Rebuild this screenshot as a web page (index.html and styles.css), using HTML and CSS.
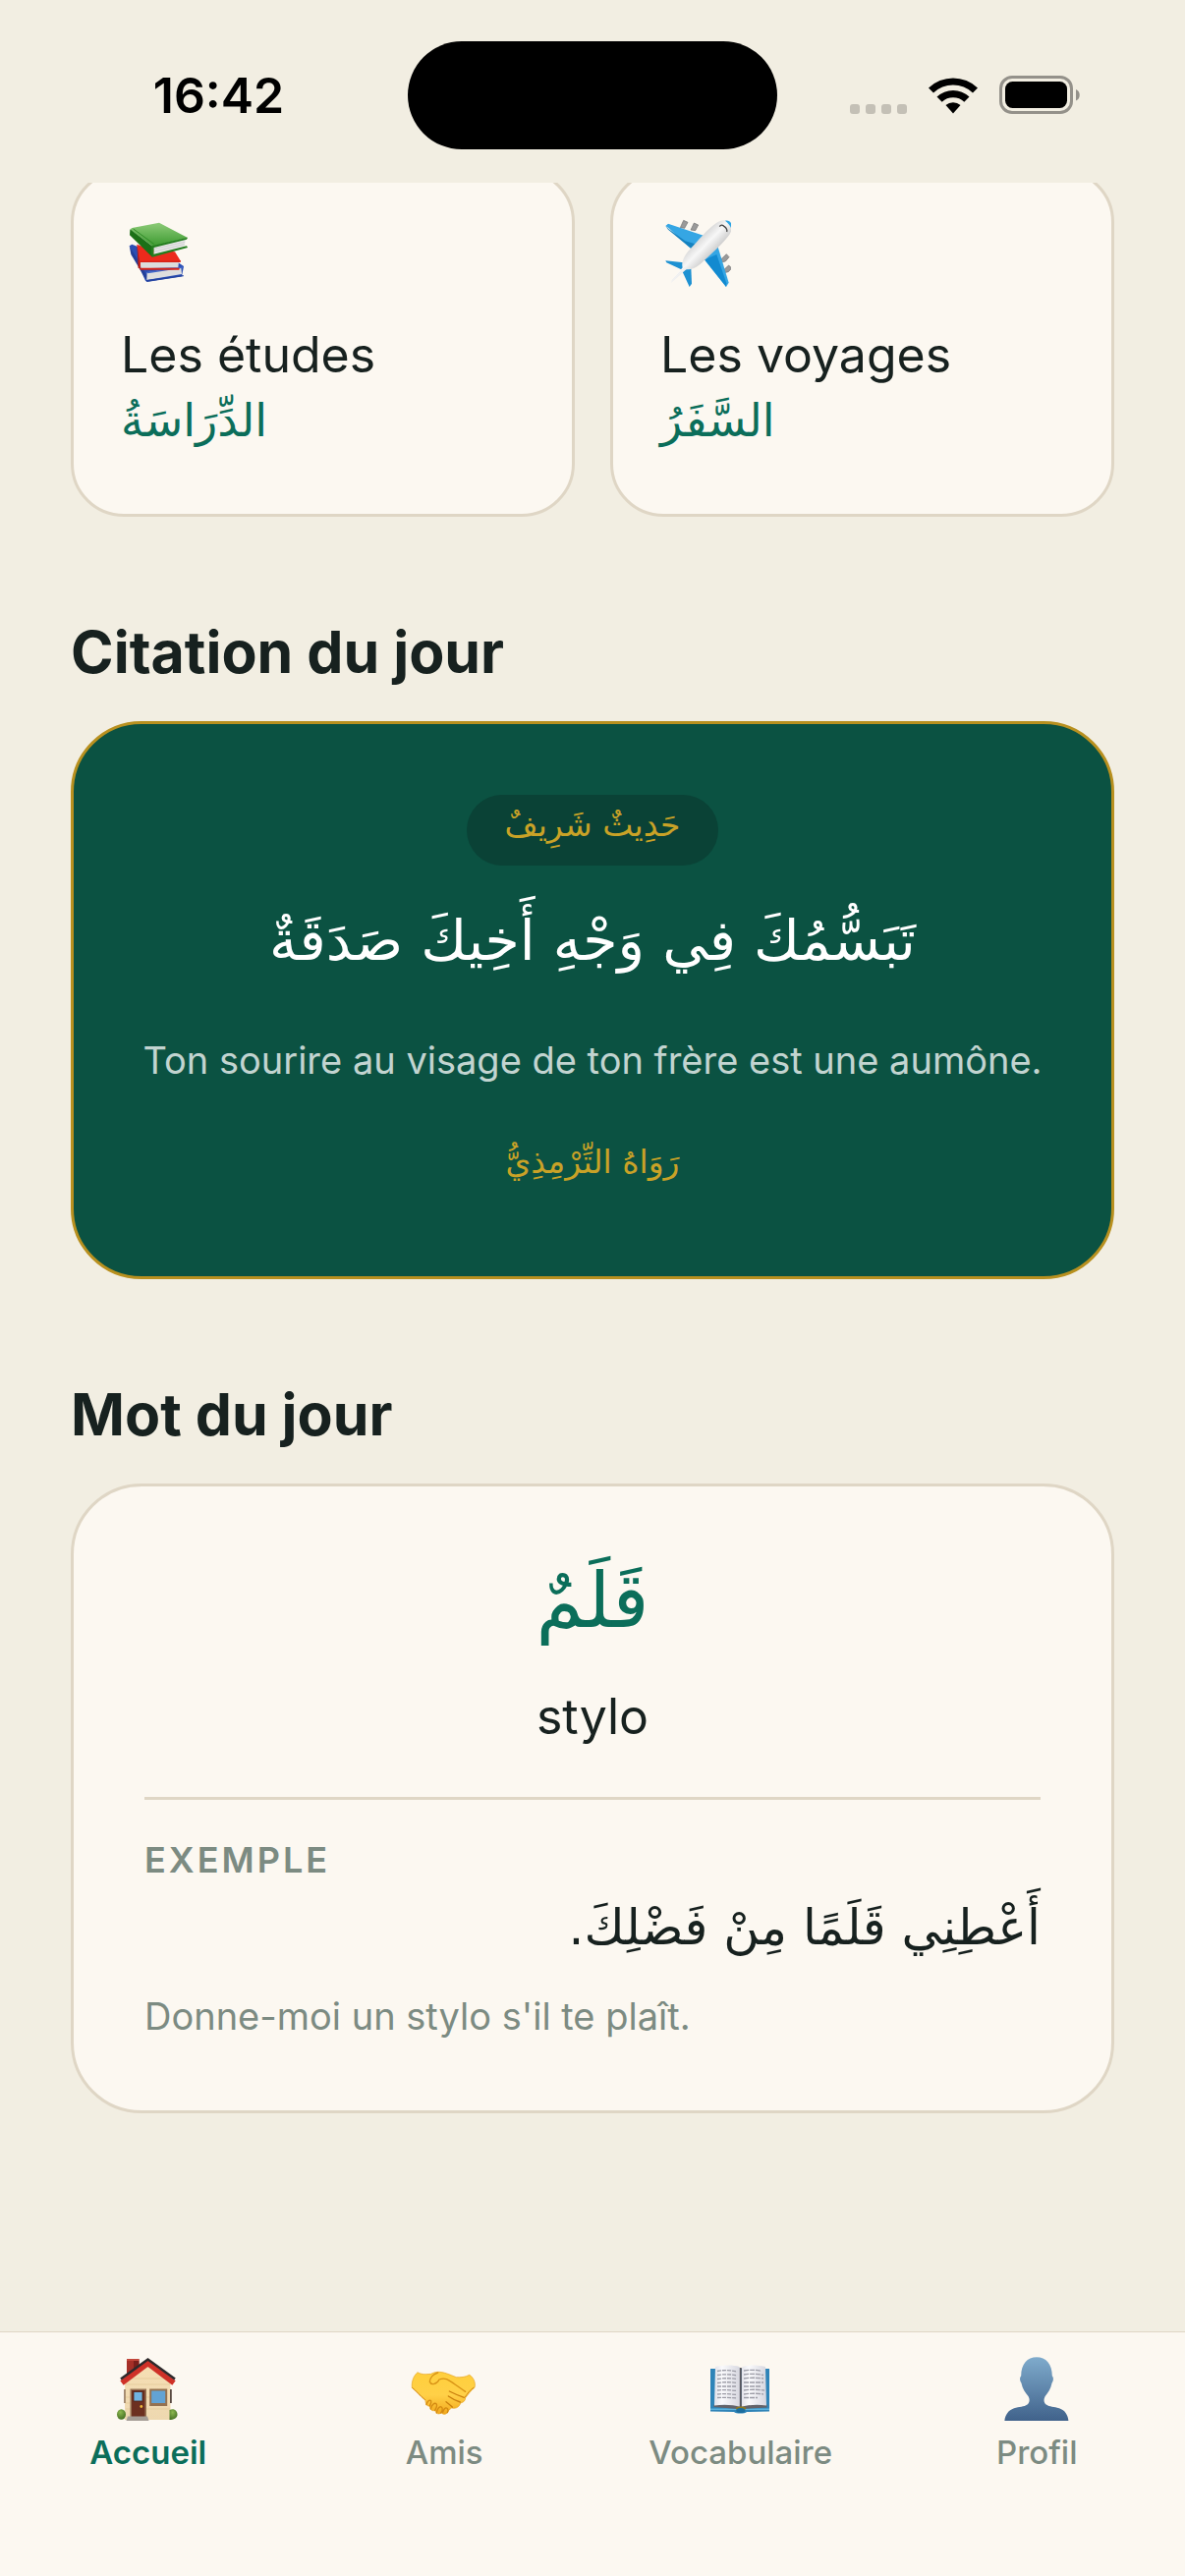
FILE: index.html
```
<!DOCTYPE html>
<html lang="fr">
<head>
    <meta charset="UTF-8">
    <meta name="viewport" content="width=device-width, initial-scale=1.0">
    <title>Accueil</title>
    <link rel="stylesheet" href="styles.css">
</head>
<body>
    <header class="status-bar">
        <div class="status-time">16:42</div>
        <div class="island"></div>
        <div class="status-icons">
            <svg class="signal" viewBox="0 0 58 38" aria-hidden="true">
                <g fill="#c4c0b6">
                    <rect x="0" y="28" width="10" height="10" rx="3"/>
                    <rect x="16" y="28" width="10" height="10" rx="3"/>
                    <rect x="32" y="28" width="10" height="10" rx="3"/>
                    <rect x="48" y="28" width="10" height="10" rx="3"/>
                </g>
            </svg>
            <svg class="wifi" viewBox="0 0 52 38" aria-hidden="true">
                <path d="M1 11.500a36 36 0 0 1 50 0l-5 5a29 29 0 0 0-40 0z"/>
                <path d="M9.500 20.500a24 24 0 0 1 33 0l-5.200 5.200a16.500 16.500 0 0 0-22.600 0z"/>
                <path d="M18.500 29a11.500 11.500 0 0 1 15 0L26 37.500z"/>
            </svg>
            <svg class="battery" viewBox="0 0 83 40" aria-hidden="true">
                <rect x="1.500" y="1.500" width="72" height="36" rx="11.500" fill="none" stroke="#94918a" stroke-width="3"/>
                <rect x="6" y="6" width="63" height="27" rx="7.500"/>
                <path d="M78 14c5 2 5 9.500 0 11.500z" fill="#94918a"/>
            </svg>
        </div>
    </header>

    <main class="scroll">
        <div class="content">
            <!-- Thèmes -->
            <div class="themes">
                <a class="card theme" href="#etudes">
                    <svg class="icon" viewBox="39 36 216 216" aria-hidden="true">
                        <defs>
                            <linearGradient id="green" x1="0" y1="0" x2="0" y2="1">
                                <stop offset="0" stop-color="#8dcb78"/>
                                <stop offset="1" stop-color="#3c9a30"/>
                            </linearGradient>
                        </defs>
                        <path d="M65 118l8-5 140 55 18 12-6 31-107 16-4-3z" fill="#2c4fb4"/>
                        <path d="M65 118l5 26 48 80 1-13-27-48z" fill="#243f98"/>
                        <path d="M119 199l104-15 2 20-107 18z" fill="#dedede"/>
                        <path d="M119 197l110-16v4l-108 17z" fill="#4065c8"/>
                        <path d="M118 222l112-15v4l-112 17z" fill="#2443a0"/>
                        <path d="M88 113l40 15 76 8 18 29-126 4z" fill="#ec2a1c"/>
                        <path d="M88 113l8 55 2 22-6-6z" fill="#b5180f"/>
                        <path d="M98 167l118-2-2 19-114 3z" fill="#dcdcdc"/>
                        <path d="M94 164l128-1-1 5H99v17h115l4 1-1 5H98z" fill="#d62318"/>
                        <path d="M156 47l87 46-106 26-68-50c0-5 4-7 8-7z" fill="url(#green)"/>
                        <path d="M67 67l69 52-1 33-69-67z" fill="#1b7017"/>
                        <path d="M139 119l98-22-4 23-94 26z" fill="#e6e6e6"/>
                        <path d="M141 127l93-21M141 135l92-22" stroke="#c6c6c6" stroke-width="2"/>
                        <path d="M134 118l109-26-3 6-100 25-1 20 101-25 3 5-108 29c-4-10-5-22-1-34z" fill="#247d1f"/>
                        <path d="M77 66l63 46" stroke="#2f8a28" stroke-width="3"/>
                    </svg>
                    <span class="theme-title">Les études</span>
                    <span class="theme-arabic" lang="ar" dir="rtl">الدِّرَاسَةُ</span>
                </a>
                <a class="card theme" href="#voyages">
                    <svg class="icon" viewBox="36 36 216 216" aria-hidden="true">
                        <defs>
                            <linearGradient id="fuselage" x1="0" y1="0" x2="1" y2="1">
                                <stop offset="0.250" stop-color="#b5b5b5"/>
                                <stop offset="0.480" stop-color="#f7f7f7"/>
                                <stop offset="0.600" stop-color="#d0d0d0"/>
                                <stop offset="0.750" stop-color="#777"/>
                            </linearGradient>
                        </defs>
                        <g fill="#9a9a9a" stroke="#6f6f6f" stroke-width="2">
                            <path d="M107 40l13 6-10 18-13-2z"/>
                            <path d="M139 48l13 6-9 17-14-2z"/>
                            <path d="M222 158l16-15 8 9-11 13-13 3z"/>
                            <path d="M231 190l14-13 9 9-10 11-13 3z"/>
                        </g>
                        <path d="M52 57l8-7 119 40-39 45-78-71z" fill="#35a6e4"/>
                        <path d="M52 57l10 10 50 36 28 8 10 24-12-2-78-65z" fill="#1582c0"/>
                        <path d="M211 118l34 112-8 13-66-83z" fill="#35a6e4"/>
                        <path d="M208 144l30 88-1 11-66-83z" fill="#128ad0"/>
                        <path d="M52 163l56 6-3 23-50-23z" fill="#1d91d2"/>
                        <path d="M102 193l28-8 2 48-7 10z" fill="#1d91d2"/>
                        <path d="M104 184c-5-16 6-39 25-59 20-20 52-60 78-77 15-10 37-12 45-3 8 10 2 30-10 45-20 26-49 51-77 77-19 18-36 24-49 23-3 1-34 31-48 41 4-12 26-33 36-47z" fill="url(#fuselage)"/>
                        <path d="M234 41c14-3 23 8 19 24-4-9-9-16-19-24z" fill="#2ca6e5"/>
                        <path d="M217 59c4-7 10-5 15 0 6 4 9 12 7 16" fill="none" stroke="#444" stroke-width="4"/>
                        <path d="M112 182l-40 41" stroke="#efefef" stroke-width="3"/>
                    </svg>
                    <span class="theme-title">Les voyages</span>
                    <span class="theme-arabic" lang="ar" dir="rtl">السَّفَرُ</span>
                </a>
            </div>

            <!-- Citation -->
            <section>
                <h2>Citation du jour</h2>
                <div class="card quote">
                    <span class="quote-tag" lang="ar" dir="rtl">حَدِيثٌ شَرِيفٌ</span>
                    <p class="quote-text" lang="ar" dir="rtl">تَبَسُّمُكَ فِي وَجْهِ أَخِيكَ صَدَقَةٌ</p>
                    <p class="quote-translation">Ton sourire au visage de ton frère est une aumône.</p>
                    <p class="quote-source" lang="ar" dir="rtl">رَوَاهُ التِّرْمِذِيُّ</p>
                </div>
            </section>

            <!-- Mot -->
            <section>
                <h2>Mot du jour</h2>
                <div class="card word">
                    <p class="word-arabic" lang="ar" dir="rtl">قَلَمٌ</p>
                    <p class="word-french">stylo</p>
                    <div class="example">
                        <h3>EXEMPLE</h3>
                        <p class="example-arabic" lang="ar" dir="rtl">أَعْطِنِي قَلَمًا مِنْ فَضْلِكَ.</p>
                        <p class="example-french">Donne-moi un stylo s'il te plaît.</p>
                    </div>
                </div>
            </section>
        </div>
    </main>

    <nav class="tab-bar">
        <a class="tab active" href="#accueil">
            <svg class="icon" viewBox="0 0 72 72" aria-hidden="true">
                <defs>
                    <linearGradient id="wall" x1="0" y1="0" x2="0" y2="1">
                        <stop offset="0" stop-color="#f6dfb4"/>
                        <stop offset="1" stop-color="#eed8b0"/>
                    </linearGradient>
                    <radialGradient id="bush" cx="0.400" cy="0.300" r="0.800">
                        <stop offset="0" stop-color="#8cb84f"/>
                        <stop offset="1" stop-color="#3d681f"/>
                    </radialGradient>
                </defs>
                <rect x="14" y="5" width="12.500" height="19" fill="#a52f27"/>
                <rect x="14" y="5" width="12.500" height="2" fill="#c2473b"/>
                <rect x="21" y="7" width="5.500" height="14" fill="#7a1f1b"/>
                <path d="M12 29L35.500 10 58.500 29v38H12z" fill="url(#wall)"/>
                <path d="M13 31h45M13 56h45M34 44h3M13 50h4M13 44h4M18 25h36" stroke="#e2c795" stroke-width="0.700"/>
                <rect x="11.200" y="36" width="1.500" height="14" fill="#8d7155"/>
                <rect x="58" y="36" width="1.800" height="14" fill="#594a42"/>
                <path d="M9 29.500L35.500 9.500 62 29.500" fill="none" stroke="#cf3128" stroke-width="5.500"/>
                <path d="M8 25.500L35.500 5.500 63 25.500" fill="none" stroke="#2d292b" stroke-width="2.600"/>
                <rect x="17.500" y="35.500" width="16.500" height="28.500" fill="#967354"/>
                <rect x="19" y="37" width="13.500" height="27" fill="#6c3021"/>
                <rect x="21" y="38.500" width="9" height="9.500" fill="#70b4e2" stroke="#4f2318" stroke-width="0.800"/>
                <circle cx="28.800" cy="53.500" r="1.400" fill="#efb83a"/>
                <rect x="37.200" y="35.500" width="18" height="17.500" fill="#94714f"/>
                <rect x="39.200" y="37.500" width="14" height="12.500" fill="#62a3d4"/>
                <ellipse cx="8.500" cy="61.500" rx="4.500" ry="5.200" fill="url(#bush)"/>
                <path d="M57.500 57c5-2 8 1 8 5 0 3-4 5-8 5z" fill="url(#bush)"/>
                <path d="M15 63.500h20l1.500 4.500h-23z" fill="#a49d96"/>
            </svg>
            <span>Accueil</span>
        </a>
        <a class="tab" href="#amis">
            <svg class="icon" viewBox="49 18 216 216" aria-hidden="true">
                <defs>
                    <linearGradient id="hand" x1="0" y1="0" x2="0" y2="1">
                        <stop offset="0" stop-color="#ffcf3c"/>
                        <stop offset="0.550" stop-color="#ffd047"/>
                        <stop offset="1" stop-color="#f2a91d"/>
                    </linearGradient>
                </defs>
                <path d="M76 74c-12 10-19 28-17 47 14 10 24 25 41 38 0 10 3 19 13 18 0 11 9 17 16 13 3 11 13 14 19 7 7 8 18 6 21-4 6-5 8-11 12-10 13 3 23-4 26-15 9-2 15-8 15-16 8-10 17-23 28-31 4-15-3-31-16-39-12 7-28 8-40 7-20-8-40-17-56-16-9 0-15 3-21 6-14 1-28 3-41-5z" fill="url(#hand)" stroke="#e4a01b" stroke-width="2"/>
                <path d="M59 121c14 10 24 25 41 38M248 120c-13 8-21 21-28 31" fill="none" stroke="#d58b12" stroke-width="3"/>
                <path d="M138 75c-13 4-24 15-25 28 4 12 23 7 29-7 13-5 22-3 32 4 16 10 31 22 48 33" fill="none" stroke="#d89215" stroke-width="4" stroke-linecap="round"/>
                <path d="M173 132c16 8 33 15 45 19M170 147c13 9 26 15 36 18M163 164c9 7 15 12 19 16" fill="none" stroke="#c97f0d" stroke-width="4" stroke-linecap="round"/>
                <path d="M103 173c2-11 10-17 14-12 2 5-2 11-4 16M116 186c3-12 11-20 17-16 5 4-1 14-4 20M134 198c2-12 8-21 15-18 5 4 2 14-2 18M153 196c2-9 8-16 13-12 5 4 3 9 1 13" fill="none" stroke="#d48a12" stroke-width="4" stroke-linecap="round"/>
            </svg>
            <span>Amis</span>
        </a>
        <a class="tab" href="#vocabulaire">
            <svg class="icon" viewBox="0 0 72 72" aria-hidden="true">
                <defs>
                    <linearGradient id="page" x1="0" y1="0" x2="1" y2="0">
                        <stop offset="0" stop-color="#e2e2ea"/>
                        <stop offset="0.300" stop-color="#fafafc"/>
                        <stop offset="1" stop-color="#d6d6df"/>
                    </linearGradient>
                </defs>
                <path d="M5 15h60v43.500l-23 .5c-2 2-11 2-13 0l-24-.5z" fill="#2f84b8"/>
                <path d="M5 55.500h60v1.500H5z" fill="#5cb2dd"/>
                <path d="M8.500 51.500h54v3L37 56h-4L8.500 54z" fill="#63636a"/>
                <path d="M10 13c9-2 18-2 24.500 0l1 4v37c-7-2.500-18-3-26.500-1.500z" fill="url(#page)"/>
                <path d="M61 13c-9-2-17-2-23.500 0l-1 4v37c7-2.500 17-3 25.500-1.500z" fill="url(#page)"/>
                <path d="M35.800 14v40" stroke="#58585f" stroke-width="2"/>
                <path d="M12 17.500c7-1.500 14-1 20 .5M12 21.500c7-1 14-1 20 .5M12 25.500c7-1 14-1 20 0M12 29.500c7-1 14-1 20 0M12 33h20M12 37c7-1 14 0 20 .5M12 41c7-1 14 0 20 .5M12 44.500c7-.5 14 0 20 .5" fill="none" stroke="#9c9ca6" stroke-width="1.300" stroke-dasharray="4 1"/>
                <path d="M39 17c7-1 12-1 18 .5M39 21c7-1 13-1 20 .5M39 25c7-1 13-1 20 0M39 29h20M39 33h18M39 37c7-1 13-1 21 0M39 41c7-1 14-1 20 0M39 44.500h14" fill="none" stroke="#9c9ca6" stroke-width="1.300" stroke-dasharray="5 1"/>
                <path d="M31 54.500c2-1.500 8-1.500 10 0v2H31z" fill="#8b7724"/>
                <ellipse cx="35.800" cy="57.500" rx="4.500" ry="2.500" fill="#1c6d9e"/>
            </svg>
            <span>Vocabulaire</span>
        </a>
        <a class="tab" href="#profil">
            <svg class="icon" viewBox="0 0 72 72" aria-hidden="true">
                <defs>
                    <linearGradient id="person" x1="0" y1="0" x2="0" y2="1">
                        <stop offset="0" stop-color="#7fabcc"/>
                        <stop offset="1" stop-color="#40628b"/>
                    </linearGradient>
                </defs>
                <path d="M36 3.300c9.500 0 15.800 7 15.800 19 1.700 1.500 1.500 5-.3 7.500-1 5.500-4 10-6.800 13.200-1.700 3-1.600 6.500 1 8.500 3.500 2.600 8 2 13.300 3.700 6 2 8.800 6.800 9.400 12.800h-65c.6-6 3.700-10.800 9.600-12.800 5.300-1.700 10-1.100 13.500-3.700 2.600-2 2.700-5.500 1-8.500-2.900-3.200-6-7.700-7-13.200-1.800-2.500-2-6-.3-7.500C20.200 10.300 26.500 3.300 36 3.300z" fill="url(#person)"/>
            </svg>
            <span>Profil</span>
        </a>
    </nav>
</body>
</html>
```

FILE: styles.css
```
* {
    box-sizing: border-box;
}

body {
    margin: 0;
    height: 100vh;
    display: flex;
    flex-direction: column;
    background-color: #f2eee2;
    color: #17211f;
    font-family: Inter, "Noto Sans", sans-serif;
}

h2, h3, p {
    margin: 0;
}

a {
    color: inherit;
    text-decoration: none;
}

[lang="ar"] {
    font-family: "DejaVu Sans", "Noto Sans Arabic", sans-serif;
}

/* Barre d'état */
.status-bar {
    display: grid;
    grid-template-columns: 1fr 376px 1fr;
    align-items: center;
    padding: 42px 0 34px;
    color: #000;
}

.status-time {
    padding-left: 30px;
    font-size: 50px;
    line-height: 60px;
    font-weight: 600;
    text-align: center;
}

.island {
    height: 110px;
    border-radius: 55px;
    background-color: #000;
}

.status-icons {
    display: flex;
    align-items: center;
    justify-content: center;
    gap: 21px;
    padding-right: 32px;
}

.signal {
    width: 58px;
    height: 38px;
}

.wifi {
    width: 52px;
    height: 38px;
}

.battery {
    width: 83px;
    height: 40px;
}

/* Contenu défilant */
.scroll {
    flex: 1;
    min-height: 0;
    overflow: hidden;
}

.content {
    margin-top: -14px;
    padding: 0 72px;
}

.card {
    background-color: #fcf8f1;
    border: 3px solid #dfd6c5;
    border-radius: 72px;
}

.themes {
    display: grid;
    grid-template-columns: 1fr 1fr;
    gap: 36px;
}

.theme {
    display: flex;
    flex-direction: column;
    padding: 48px 48px 60px;
    border-radius: 54px;
}

.icon {
    display: block;
    width: 72px;
    height: 72px;
}

.theme-title {
    margin-top: 34px;
    font-size: 50px;
    line-height: 64px;
}

.theme-arabic {
    color: #0b6e5a;
    font-size: 46px;
    line-height: 70px;
    text-align: left;
}

h2 {
    margin: 102px 0 34px;
    font-size: 59px;
    line-height: 72px;
    font-weight: 700;
}

/* Citation du jour */
.quote {
    display: flex;
    flex-direction: column;
    align-items: center;
    padding: 72px 60px;
    background-color: #0b5242;
    border-color: #b8901f;
    text-align: center;
}

.quote-tag {
    padding: 0 38px 10px;
    border-radius: 36px;
    background-color: #0a4236;
    color: #c9a227;
    font-size: 33px;
    line-height: 62px;
}

.quote-text {
    margin-top: 26px;
    color: #fff;
    font-size: 57px;
    line-height: 100px;
}

.quote-translation {
    margin-top: 48px;
    color: #c2d4d0;
    font-size: 38px;
    line-height: 48px;
}

.quote-source {
    margin-top: 36px;
    color: #c9a227;
    font-size: 33px;
    line-height: 88px;
}

/* Mot du jour */
.word {
    padding: 72px;
}

.word-arabic {
    color: #0b6e5a;
    font-size: 78px;
    line-height: 88px;
    text-align: center;
}

.word-french {
    margin-top: 42px;
    font-size: 50px;
    line-height: 64px;
    text-align: center;
}

.example {
    margin-top: 50px;
    padding-top: 36px;
    border-top: 3px solid #dfd6c5;
}

h3 {
    color: #7c8b82;
    font-size: 36px;
    line-height: 50px;
    font-weight: 600;
    letter-spacing: 3px;
}

.example-arabic {
    font-size: 50px;
    line-height: 88px;
}

.example-french {
    margin-top: 22px;
    color: #7c8b82;
    font-size: 38px;
    line-height: 48px;
}

/* Onglets */
.tab-bar {
    display: grid;
    grid-template-columns: repeat(4, 1fr);
    padding: 22px 0 106px;
    background-color: #fcf8f1;
    border-top: 1px solid #dfd6c5;
}

.tab {
    display: flex;
    flex-direction: column;
    align-items: center;
    gap: 8px;
    color: #7c8b82;
    font-size: 33px;
    line-height: 40px;
    font-weight: 500;
}

.tab.active {
    color: #0b6e5a;
    font-weight: 600;
}
```
